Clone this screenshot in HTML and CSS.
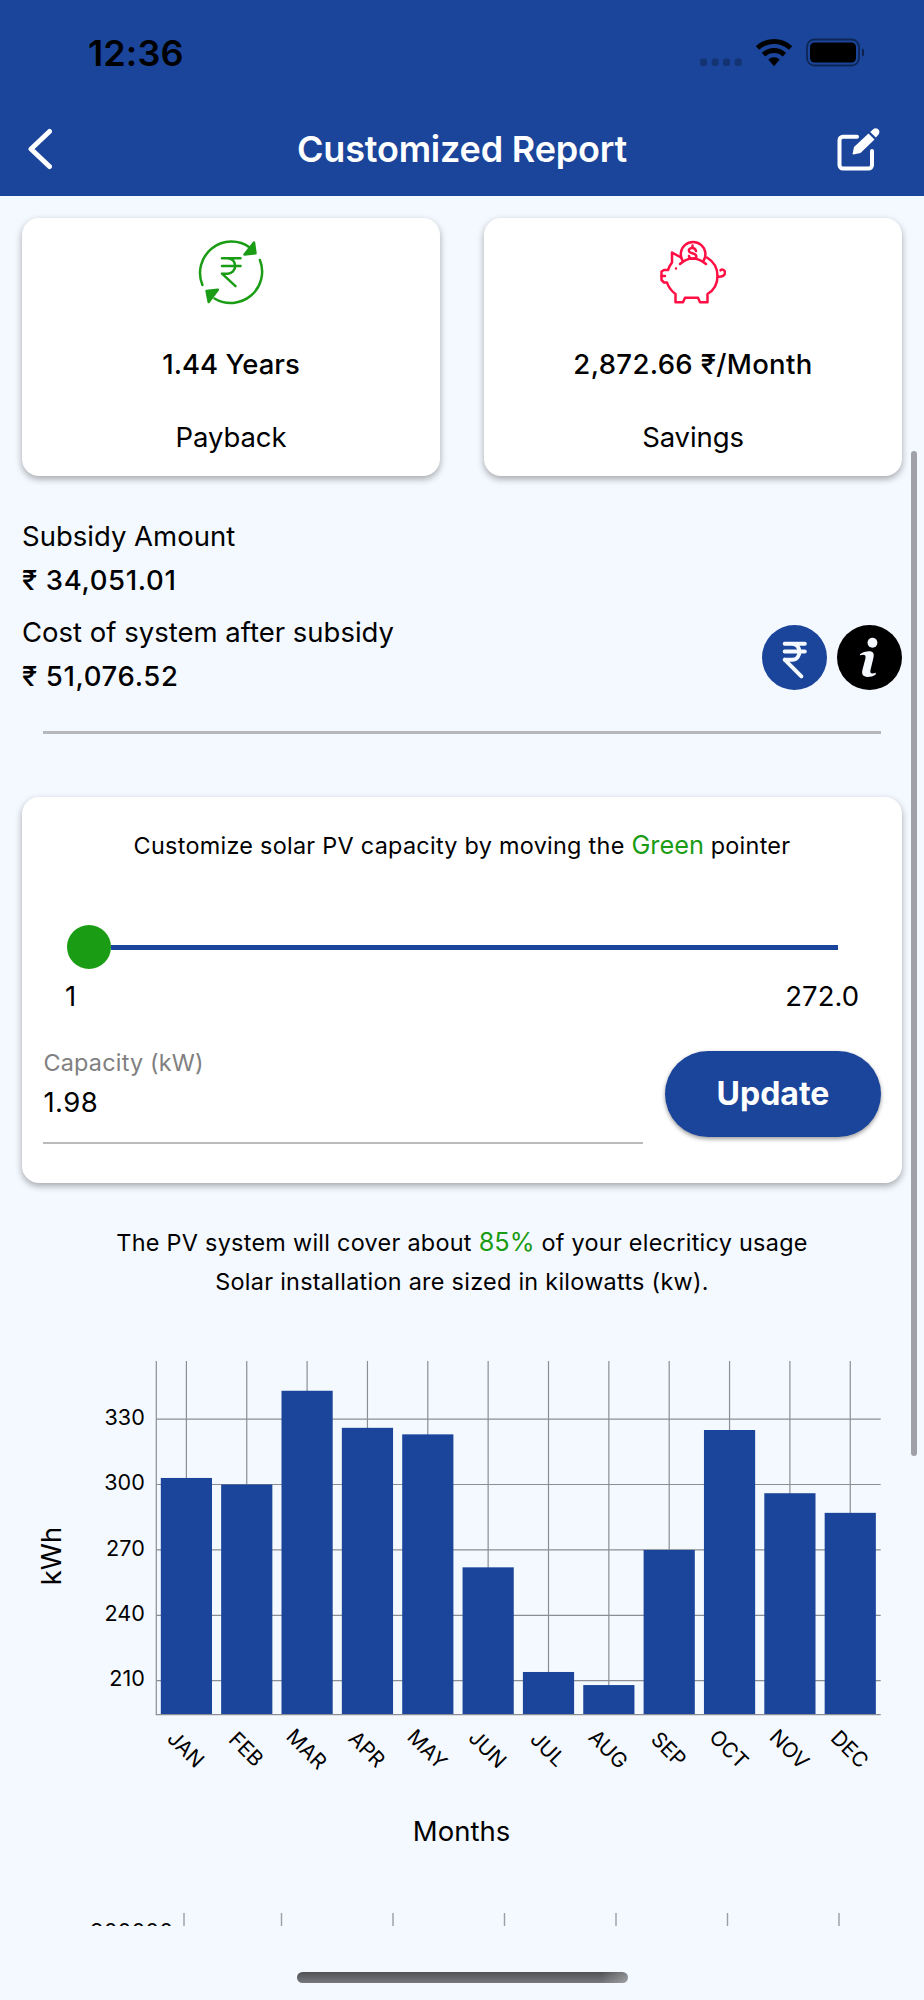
FILE: index.html
```html
<!DOCTYPE html>
<html lang="en">
<head>
<meta charset="utf-8">
<title>Customized Report</title>
<link rel="stylesheet" href="styles.css">
</head>
<body>
<div class="screen">
  <header class="header">
    <div class="status">
      <span class="clock">12:36</span>
      <svg class="status-icons" width="164" height="32" viewBox="0 0 164 32">
        <g opacity=".25"><rect x="0" y="21.500" width="7" height="7.500" rx="2.500"/><rect x="11.700" y="21.500" width="7" height="7.500" rx="2.500"/><rect x="23" y="21.500" width="7" height="7.500" rx="2.500"/><rect x="34.700" y="21.500" width="7" height="7.500" rx="2.500"/></g>
        <g fill="none" stroke="#000" stroke-width="5"><path d="M57.500 11a24 24 0 0 1 33 0"/><path d="M63.600 17.700a15 15 0 0 1 20.800 0"/></g>
        <path d="M68.300 22.500a8.500 8.500 0 0 1 11.400 0L74 29.200z"/>
        <rect x="107" y="2.500" width="52" height="26" rx="7.500" fill="none" stroke="#000" stroke-opacity=".45" stroke-width="1.800"/>
        <rect x="110" y="5.500" width="46" height="20" rx="4.500"/>
        <path d="M162 11.500q3 1 3 4t-3 4z" opacity=".5"/>
      </svg>
    </div>
    <div class="nav">
      <svg width="24" height="44" viewBox="0 0 24 44"><path d="M21.500 4.500L3 22l18.500 17.500" fill="none" stroke="#fff" stroke-width="5" stroke-linecap="round" stroke-linejoin="round"/></svg>
      <h1 class="title">Customized Report</h1>
      <svg class="edit" width="46" height="46" viewBox="0 0 46 46">
        <path d="M21 10.700H7a3.500 3.500 0 0 0-3.500 3.500V39A3.500 3.500 0 0 0 7 42.500h25.500A3.500 3.500 0 0 0 36 39V25" fill="none" stroke="#fff" stroke-width="4" stroke-linecap="round"/>
        <path d="M17.500 28.500q-1 0-.8-1.200l1.300-6.300L32.500 7.500l6 6L24.500 27z" fill="#fff"/><path d="M34.200 6l3-2.700c3.500-3 8.200 1.700 5.300 5.200L39.900 11.500z" fill="#fff"/>
      </svg>
    </div>
  </header>

  <main class="content">
    <div class="stats">
      <section class="card stat">
        <svg width="66" height="66" viewBox="0 0 66 66" fill="none" stroke="#1a9c14" stroke-width="2.500" stroke-linecap="round" stroke-linejoin="round">
          <path d="M4.400 46A31.400 31.400 0 0 1 52 8.700M61.900 21A31.400 31.400 0 0 1 16.500 59.500"/>
          <path d="M56 3.600l1.500 10.700L46.500 15.500zM8.600 52.100l11.200-1.400L10.700 63z" fill="#1a9c14"/>
          <path d="M24 19.200h18.500M24 27h18.500M24 34.700h5.500a7.700 7.700 0 0 0 0-15.500M24 34.700l13.500 12.500"/>
        </svg>
        <strong class="value">1.44 Years</strong>
        <span class="name">Payback</span>
      </section>
      <section class="card stat">
        <svg width="66" height="66" viewBox="0 0 66 66" fill="none" stroke="#ff0f43" stroke-width="2.500" stroke-linecap="round" stroke-linejoin="round">
          <path d="M47 18.500c6.500 4 10.500 11 10.500 18.500 0 8-4 14.500-10 18v8.200h-7.500L38 58.700H25l-2 4.500h-7.500V55c-4-3-7-6.500-8.500-11.500H4L1.500 41V32.500L4 31h4c1-3 2.500-5.500 4-7.500V13.500l9 5"/>
          <path d="M20 25q12.500-11 26 0"/><path d="M22.500 21.500a12.300 12.300 0 1 1 21.200 0"/>
          <path d="M1.500 37h3.500M16 29.500v.1M57.500 37.500c4 .5 7.500-.5 7.500-4 0-2.700-3-3.800-4.500-2.200"/>
          <path d="M36 12c-1-4.500-8-3.500-7 0 .7 3 6.500 1.500 7.300 5 .4 2-1.500 2.800-3.600 2.800M29 17c.2 1.500 1 2.500 3 2.800M32.500 6.500v2"/>
        </svg>
        <strong class="value value-rate">2,872.66 ₹/Month</strong>
        <span class="name">Savings</span>
      </section>
    </div>

    <div class="cost">
      <dl class="amounts">
        <dt>Subsidy Amount</dt><dd>₹ 34,051.01</dd>
        <dt>Cost of system after subsidy</dt><dd>₹ 51,076.52</dd>
      </dl>
      <div class="actions">
        <svg width="65" height="65" viewBox="0 0 66 66"><circle cx="33" cy="33" r="33" fill="#1a459b"/><path d="M23 19h20.500M23 27h20.500M23 35.200h7.500c10 0 10-16.200 0-16.200M23 35.200l17 17" fill="none" stroke="#f4f9ff" stroke-width="4" stroke-linecap="round" stroke-linejoin="round"/></svg>
        <svg width="65" height="65" viewBox="0 0 66 66"><circle cx="33" cy="33" r="33"/><g fill="#f4f9ff"><circle cx="36" cy="18" r="5"/><path d="M23.500 29.400q3.500-2.500 8.500-2.700c5-.2 6 2.500 5 6.500l-3 12.500c-.8 3.500 1 4.500 5.500 2.800l-.4 2q-3.500 2.200-7.800 2.300c-5 .1-6.500-3-5.500-7l3-11.500c1-4-1-5-5.600-3.500z"/></g></svg>
      </div>
    </div>
    <hr class="divider">

    <section class="card sizing">
      <p class="hint">Customize solar PV capacity by moving the <b class="accent">Green</b> pointer</p>
      <div class="slider"><i class="knob"></i><i class="track"></i></div>
      <div class="range"><span>1</span><span>272.0</span></div>
      <div class="form">
        <label class="field"><span class="label">Capacity (kW)</span><span class="input">1.98</span></label>
        <button class="update">Update</button>
      </div>
    </section>

    <p class="hint note">The PV system will cover about <b class="accent">85%</b> of your elecriticy usage<br>Solar installation are sized in kilowatts (kw).</p>

    <svg class="chart" width="924" height="530" viewBox="0 1340 924 530" id="chart"></svg>
    <div class="next">
      <span class="tick-label">900000</span>
      <svg width="760" height="14" viewBox="170 0 760 14" stroke="#9b9ea3" stroke-width="1.400"><path d="M184 0v14M281.500 0v14M393 0v14M504.500 0v14M616 0v14M727.500 0v14M839 0v14"/></svg>
    </div>
  </main>
  <div class="scrollbar"></div>
  <div class="home"></div>
</div>
<script src="chart.js"></script>
</body>
</html>
```
FILE: chart.js
```js
const months = ['JAN','FEB','MAR','APR','MAY','JUN','JUL','AUG','SEP','OCT','NOV','DEC'];
const kwh = [303, 300, 343, 326, 323, 262, 214, 208, 270, 325, 296, 287];
const y = v => 1484.5 + (300 - v) * 2.18;
const x = i => 186.4 + i * 60.35;
let grid = '', bars = '', text = '';
for (const t of [330, 300, 270, 240, 210]) {
  grid += `M156.300 ${y(t)}H880.700`;
  text += `<text class="ax" x="144.800" y="${y(t) + 5.7}" text-anchor="end">${t}</text>`;
}
months.forEach((m, i) => {
  grid += `M${x(i)} 1361V1714.700`;
  bars += `<rect x="${x(i) - 25.6}" y="${y(kwh[i])}" width="51.200" height="${1714.5 - y(kwh[i])}"/>`;
  text += `<text class="xl" transform="translate(${x(i) - 0.4} 1749) rotate(45)" text-anchor="middle" y="7.500">${m}</text>`;
});
document.getElementById('chart').innerHTML =
  `<path class="grid" d="${grid}"/><g class="bars">${bars}</g>` +
  `<path class="grid" d="M156.300 1361V1714.700H880.700"/>${text}` +
  '<text x="461.500" y="1841" text-anchor="middle">Months</text>' +
  '<text transform="translate(61 1556) rotate(-90)" text-anchor="middle">kWh</text>';
```
FILE: styles.css
```css
* { box-sizing: border-box; }
body { margin: 0; background: #f4f9ff; color: #000; font-family: Inter, sans-serif; font-size: 27.500px; }
h1, p, dl, dd { margin: 0; }
svg { display: block; flex: none; }
.screen { position: relative; height: 2000px; overflow: hidden; }
.header { height: 196px; background: #1a459b; }
.status { height: 106px; padding: 0 60px 0 88px; display: flex; align-items: center; justify-content: space-between; }
.clock { font-size: 36px; font-weight: 600; letter-spacing: .1px; }
.nav { height: 86px; padding: 0 42px 0 28px; display: grid; grid-template-columns: 1fr auto 1fr; align-items: center; }
.title { font-size: 36px; font-weight: 600; color: #fff; letter-spacing: -.2px; padding-left: 14px; }
.edit { justify-self: end; }
.content { height: 1730px; padding: 22px 22px 0; overflow: hidden; }
.stats { display: grid; grid-template-columns: 1fr 1fr; gap: 44px; }
.card { background: #fff; border-radius: 17px; box-shadow: 0 3px 7px rgba(0, 0, 0, .33); }
.stat { height: 258px; padding-top: 21px; display: flex; flex-direction: column; align-items: center; line-height: 40px; }
.value { margin-top: 39px; font-weight: 500; }
.value-rate { letter-spacing: .35px; }
.name { margin-top: 33px; letter-spacing: -.1px; }
.cost { margin-top: 38px; display: flex; justify-content: space-between; align-items: flex-end; line-height: 44px; }
.amounts dd { font-weight: 500; letter-spacing: .65px; margin-bottom: 7.500px; }
.actions { display: flex; gap: 10.500px; padding-bottom: 15px; }
.divider { height: 3px; margin: 26px 21px 63px; border: 0; background: #b5b7bb; }
.sizing { height: 386px; padding: 29px 21px 0; }
.hint { font-size: 23.400px; line-height: 40px; text-align: center; letter-spacing: .28px; }
.accent { color: #1a9c14; font-size: 25.300px; font-weight: 400; line-height: 1; letter-spacing: 0; }
.slider { margin: 59px 43px 0 24px; height: 44px; display: flex; align-items: center; }
.knob { width: 44px; height: 44px; border-radius: 50%; background: #1a9c14; }
.track { flex: 1; height: 5px; background: #1a459b; }
.range { display: flex; justify-content: space-between; padding: 0 22px; margin-top: 6.500px; line-height: 40px; }
.form { display: flex; gap: 22px; margin-top: 27px; }
.field { flex: 1; height: 101px; border-bottom: 2px solid #bbb; display: flex; flex-direction: column; line-height: 40px; }
.label { font-size: 23.400px; color: #808080; letter-spacing: .2px; padding: .5px 0 0 .5px; }
.input { letter-spacing: .4px; line-height: 39px; padding-left: .5px; }
.update { width: 216px; height: 86px; margin-top: 8px; border: 0; border-radius: 43px; background: #1a459b; color: #fff; font: bold 32px Inter, sans-serif; box-shadow: 0 2px 4px rgba(0, 0, 0, .4); }
.note { margin-top: 40px; line-height: 39px; }
.chart { margin: 39px 0 0 -22px; }
.grid { fill: none; stroke: #8b8e93; stroke-width: 1.200; }
.bars { fill: #1a459b; }
.ax { font-size: 21.600px; }
.xl { font-size: 20.800px; }
.next { display: flex; height: 14px; margin-top: 43px; margin-left: 68px; overflow: hidden; }
.tick-label { width: 80px; font-size: 22px; line-height: 37px; }
.scrollbar { position: absolute; left: 911px; top: 451px; width: 6px; height: 1005px; border-radius: 3px; background: #9fa1a7; }
.home { position: absolute; left: 297px; top: 1971.500px; width: 331px; height: 11px; border-radius: 6px; background: linear-gradient(90deg, transparent 92%, rgba(255, 255, 255, .3)), linear-gradient(#505154, #77797d); }
```
